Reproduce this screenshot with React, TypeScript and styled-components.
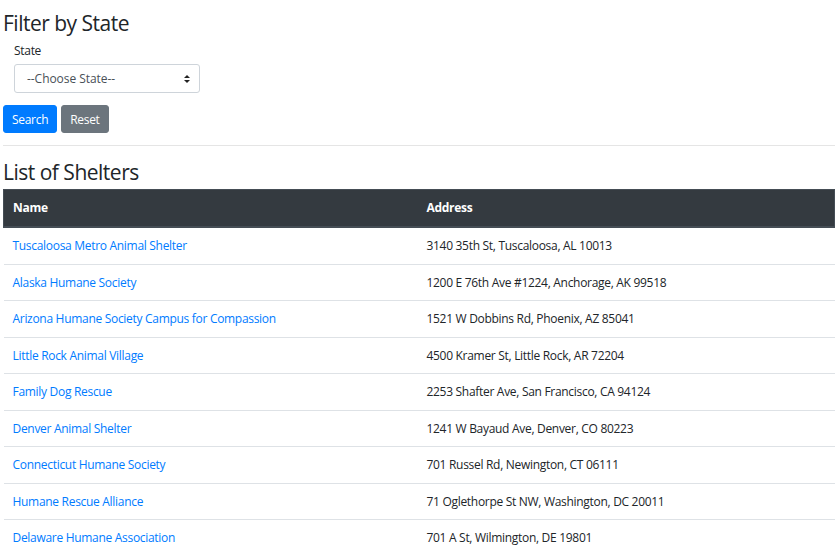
import React from "react";
import styled, { createGlobalStyle } from "styled-components";

const Global = createGlobalStyle`
  html, body { margin: 0; padding: 0; background: #fff; }
  body {
    font-family: "Open Sans", "Noto Sans", Arial, sans-serif;
    font-size: 12px;
    line-height: 18px;
    letter-spacing: -0.3px;
    color: #212529;
  }
  * { box-sizing: border-box; }
`;

const Page = styled.div`
  padding: 9px 3px 0 3px;
`;

const Heading = styled.h2<{ $mb?: number }>`
  margin: 0 0 ${(p) => p.$mb ?? 5}px 0;
  font-size: 21px;
  font-weight: 400;
  line-height: 28px;
  letter-spacing: -0.5px;
  color: #212529;
`;

const FormGroup = styled.div`
  padding: 0 11px;
  margin-bottom: 12px;
  display: flex;
  flex-direction: column;
`;

const Label = styled.label`
  font-size: 12px;
  line-height: 18px;
  margin-bottom: 4px;
`;

const SelectBox = styled.div`
  width: 186px;
  height: 29px;
  border: 1px solid #ced4da;
  border-radius: 3px;
  display: flex;
  align-items: center;
  justify-content: space-between;
  padding: 0 8px 0 12px;
  color: #495057;
  font-size: 12px;
  letter-spacing: -0.05px;
`;

const Buttons = styled.div`
  display: flex;
  gap: 4px;
`;

const Button = styled.button<{ $variant: "primary" | "secondary" }>`
  font-family: inherit;
  font-size: 12px;
  letter-spacing: -0.3px;
  line-height: 18px;
  height: 28px;
  padding: 1px 8px 0 8px;
  border-radius: 3px;
  border: 1px solid ${(p) => (p.$variant === "primary" ? "#007bff" : "#6c757d")};
  background: ${(p) => (p.$variant === "primary" ? "#007bff" : "#6c757d")};
  color: #fff;
`;

const Rule = styled.hr`
  border: 0;
  border-top: 1px solid rgba(0, 0, 0, 0.1);
  margin: 12px 0 12px 0;
`;

const Table = styled.table`
  width: 832px;
  border-collapse: collapse;
  font-size: 12px;
  line-height: 18px;
`;

const Th = styled.th<{ $w?: number }>`
  text-align: left;
  font-weight: 700;
  color: #fff;
  background: #343a40;
  border: 1px solid #454d55;
  border-width: 1px 0 2px 0;
  padding: 9px 9px;
  width: ${(p) => (p.$w ? `${p.$w}px` : "auto")};
  &:first-child { border-left: 1px solid #454d55; }
  &:last-child { border-right: 1px solid #454d55; }
`;

const Td = styled.td`
  padding: 9px 9px 8.5px 9px;
  border-top: 1px solid #dee2e6;
`;

const Link = styled.a`
  color: #007bff;
  text-decoration: none;
`;

const Arrows = () => (
  <svg width="8" height="10" viewBox="0 0 8 10">
    <path d="M4 1 L7 4 H1 Z" fill="#222" />
    <path d="M4 9 L7 6 H1 Z" fill="#222" />
  </svg>
);

const shelters: [string, string][] = [
  ["Tuscaloosa Metro Animal Shelter", "3140 35th St, Tuscaloosa, AL 10013"],
  ["Alaska Humane Society", "1200 E 76th Ave #1224, Anchorage, AK 99518"],
  ["Arizona Humane Society Campus for Compassion", "1521 W Dobbins Rd, Phoenix, AZ 85041"],
  ["Little Rock Animal Village", "4500 Kramer St, Little Rock, AR 72204"],
  ["Family Dog Rescue", "2253 Shafter Ave, San Francisco, CA 94124"],
  ["Denver Animal Shelter", "1241 W Bayaud Ave, Denver, CO 80223"],
  ["Connecticut Humane Society", "701 Russel Rd, Newington, CT 06111"],
  ["Humane Rescue Alliance", "71 Oglethorpe St NW, Washington, DC 20011"],
  ["Delaware Humane Association", "701 A St, Wilmington, DE 19801"],
];

export default function App() {
  return (
    <>
      <Global />
      <Page>
        <Heading>Filter by State</Heading>
        <FormGroup>
          <Label>State</Label>
          <SelectBox>
            <span>--Choose State--</span>
            <Arrows />
          </SelectBox>
        </FormGroup>
        <Buttons>
          <Button $variant="primary">Search</Button>
          <Button $variant="secondary">Reset</Button>
        </Buttons>
        <Rule />
        <Heading $mb={3}>List of Shelters</Heading>
        <Table>
          <thead>
            <tr>
              <Th $w={414}>Name</Th>
              <Th>Address</Th>
            </tr>
          </thead>
          <tbody>
            {shelters.map(([n, a]) => (
              <tr key={n}>
                <Td>
                  <Link href="#">{n}</Link>
                </Td>
                <Td>{a}</Td>
              </tr>
            ))}
          </tbody>
        </Table>
      </Page>
    </>
  );
}
